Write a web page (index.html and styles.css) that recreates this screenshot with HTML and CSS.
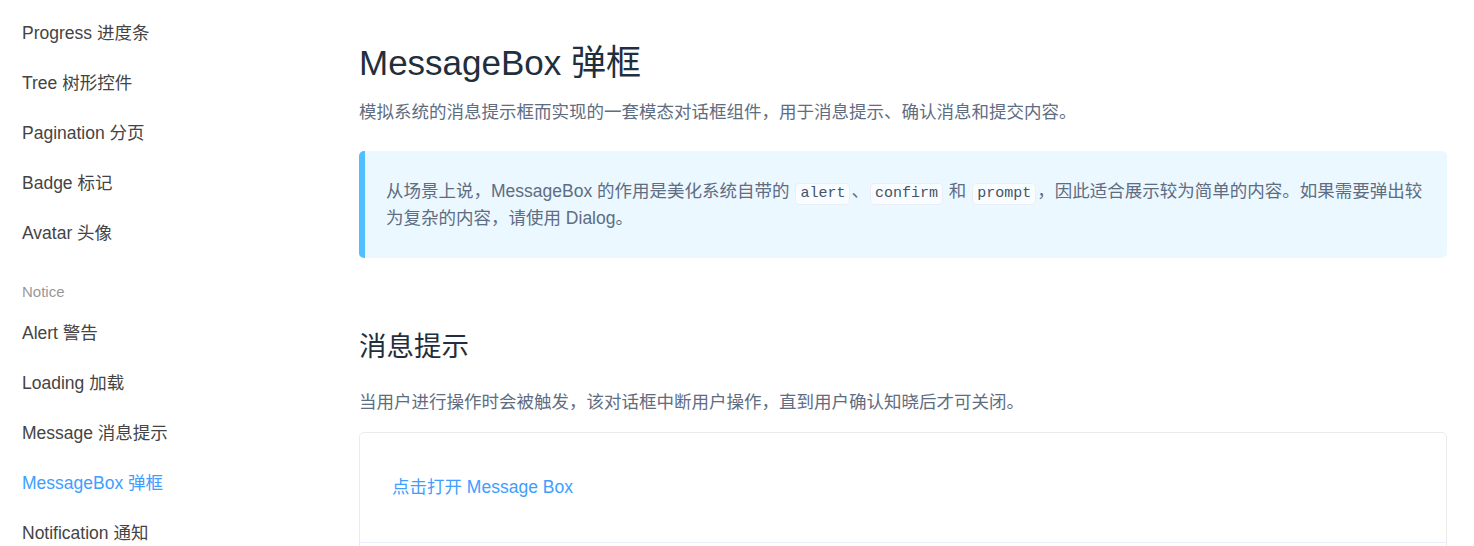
FILE: index.html
```html
<!DOCTYPE html>
<html lang="zh-CN">
<head>
<meta charset="utf-8">
<title>MessageBox 弹框</title>
<link rel="stylesheet" href="styles.css">
</head>
<body>
<div class="page">
  <nav class="sidebar">
    <ul class="nav-list">
      <li class="nav-item">Progress 进度条</li>
      <li class="nav-item">Tree 树形控件</li>
      <li class="nav-item">Pagination 分页</li>
      <li class="nav-item">Badge 标记</li>
      <li class="nav-item">Avatar 头像</li>
    </ul>
    <div class="nav-group">Notice</div>
    <ul class="nav-list">
      <li class="nav-item">Alert 警告</li>
      <li class="nav-item">Loading 加载</li>
      <li class="nav-item">Message 消息提示</li>
      <li class="nav-item active">MessageBox 弹框</li>
      <li class="nav-item">Notification 通知</li>
    </ul>
  </nav>
  <main class="content">
    <h2 class="title">MessageBox 弹框</h2>
    <p class="desc">模拟系统的消息提示框而实现的一套模态对话框组件，用于消息提示、确认消息和提交内容。</p>
    <div class="tip">
      <p class="tip-text">从场景上说，MessageBox 的作用是美化系统自带的 <code class="code">alert</code>、<code class="code">confirm</code> 和 <code class="code">prompt</code>，因此适合展示较为简单的内容。如果需要弹出较为复杂的内容，请使用 Dialog。</p>
    </div>
    <h3 class="section-title">消息提示</h3>
    <p class="desc section-desc">当用户进行操作时会被触发，该对话框中断用户操作，直到用户确认知晓后才可关闭。</p>
    <div class="demo-block">
      <div class="demo-source">
        <button class="text-button" type="button">点击打开 Message Box</button>
      </div>
      <div class="demo-meta"></div>
    </div>
  </main>
</div>
</body>
</html>
```

FILE: styles.css
```css
* { box-sizing: border-box; }

html, body {
  margin: 0;
  padding: 0;
  background: #fff;
  overflow: hidden;
}

body {
  font-family: "Liberation Sans", "Noto Sans CJK SC", sans-serif;
  color: #333;
}

.page {
  display: grid;
  grid-template-columns: 359px 1fr;
  padding-right: 27px;
}

.sidebar {
  padding-top: 8px;
}

.nav-list {
  list-style: none;
  margin: 0;
  padding: 0;
}

.nav-item {
  padding-left: 22px;
  font-size: 17.5px;
  line-height: 50px;
  height: 50px;
  color: #444;
}

.nav-item.active {
  color: #409eff;
}

.nav-group {
  padding-left: 22px;
  font-size: 15px;
  line-height: 20px;
  color: #999;
  margin: 24px 0 6px;
}

.content {
  padding-top: 42px;
  min-width: 0;
}

.title {
  margin: 0;
  font-size: 35px;
  font-weight: 400;
  line-height: 42px;
  color: #1f2f3d;
}

.desc {
  margin: 15px 0 0;
  font-size: 17.5px;
  line-height: 26px;
  color: #5e6d82;
}

.tip {
  margin-top: 26px;
  background: #ecf8ff;
  border-left: 6px solid #50bfff;
  border-radius: 5px;
  padding: 10px 16px 10px 21px;
}

.tip-text {
  margin: 17px 0;
  font-size: 17.5px;
  line-height: 26px;
  color: #5e6d82;
}

.code {
  font-family: "Liberation Mono", "Noto Sans CJK SC", monospace;
  font-size: 15px;
  line-height: 20px;
  display: inline-block;
  color: #445368;
  background: rgba(255, 255, 255, 0.7);
  border: 1px solid #eaeefb;
  border-radius: 4px;
  padding: 0 4px;
  margin: 0 1px;
}

.section-title {
  margin: 71px 0 0;
  font-size: 27.5px;
  font-weight: 400;
  line-height: 36px;
  color: #1f2f3d;
}

.section-desc {
  margin-top: 24px;
}

.demo-block {
  margin-top: 17px;
  border: 1px solid #ebebeb;
  border-radius: 5px;
}

.demo-source {
  padding: 41px 32px 42px;
  border-bottom: 1px solid #eaeefb;
}

.text-button {
  display: block;
  padding: 0;
  border: 0;
  background: none;
  font-family: inherit;
  font-size: 17.5px;
  line-height: 26px;
  color: #409eff;
  cursor: pointer;
}

.demo-meta {
  height: 40px;
}
```
